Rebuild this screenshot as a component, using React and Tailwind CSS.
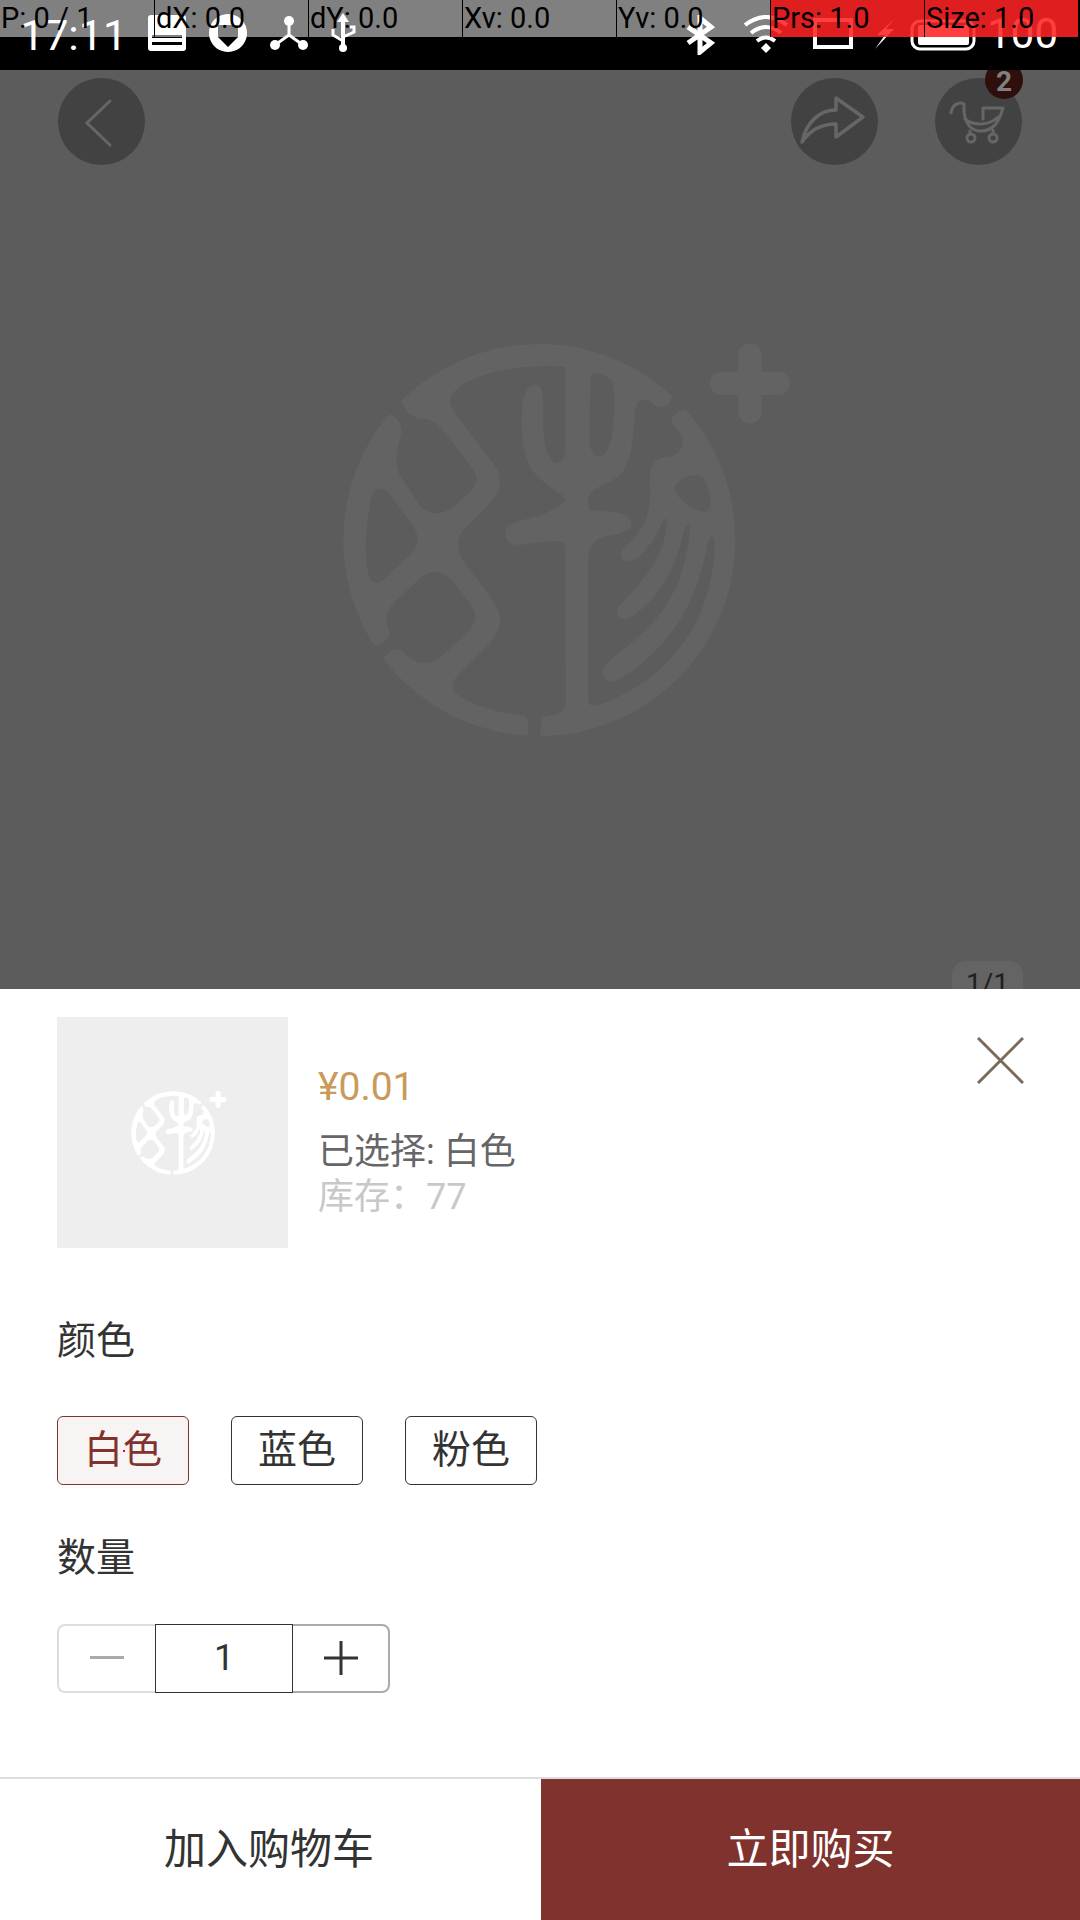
import React from 'react';

const cjk = "font-['Roboto','Noto_Sans_CJK_SC',sans-serif]";

// disc with the shapes of the mark cut out in the background colour
const Logo = ({ color, bg, className }) => (
  <svg viewBox="0 0 1440 1320" className={className}>
    <circle cx="658" cy="660" r="588" fill={color} />
    <g fill={bg}>
      <path d="M735 140 C600 130 440 160 395 225 C380 250 400 270 420 300 L520 430 C550 470 545 510 510 550 L440 620 C405 650 405 690 435 730 L510 830 C550 880 550 920 510 970 L410 1070 C385 1100 400 1120 430 1135 C480 1165 550 1180 610 1188 C628 1192 628 1210 622 1260 L660 1260 L665 1200 C668 1188 680 1185 700 1185 C730 1180 738 1165 738 1130 L735 680 C733 665 720 662 690 662 L600 675 C560 675 550 650 560 625 C570 605 610 600 650 590 C690 575 730 555 735 540 C735 525 700 510 670 485 C625 450 605 400 605 310 C605 240 615 195 645 195 C675 195 670 240 670 320 C672 380 685 425 712 428 C730 425 735 410 735 380 Z" />
      <path d="M812 180 C815 155 835 155 860 170 C885 180 885 210 883 270 C880 340 870 410 835 410 C810 405 808 370 808 330 Z" />
      <path d="M1060 222 L1050 245 C1040 265 1020 270 985 240 C965 235 950 245 945 270 C940 350 935 420 905 460 C885 480 860 490 850 495 C805 510 795 550 810 570 C860 575 935 575 935 610 C935 640 880 645 850 650 C820 660 805 680 805 720 L805 1140 C805 1160 825 1162 850 1150 C1000 1090 1170 960 1185 680 C1185 650 1175 640 1165 660 C1130 850 1060 980 885 1085 C860 1095 835 1060 855 1035 C950 950 1090 880 1110 625 C1105 610 1095 615 1090 640 C1060 780 990 860 925 895 C900 905 880 880 900 855 C970 780 1030 720 1042 605 C1040 590 1030 595 1025 610 C1000 670 960 720 925 725 C900 725 895 695 915 680 C960 640 995 600 990 500 C985 440 1000 415 1040 412 C1080 410 1100 370 1080 340 C1060 315 1045 305 1060 290 C1075 275 1085 265 1100 272 L1125 215 Z" />
      <path d="M1065 500 C1080 470 1140 450 1155 480 C1170 520 1185 570 1155 575 C1120 575 1060 530 1065 500 Z" />
      <path d="M250 255 C265 290 290 295 320 297 C345 300 360 320 380 345 L460 450 C475 475 470 495 450 515 L400 560 C360 590 320 585 295 550 L245 475 C225 445 225 410 240 355 C250 325 240 300 215 285 L170 280 L205 200 Z" />
      <path d="M155 530 C160 500 190 495 210 525 L280 620 C300 650 295 680 270 705 L195 775 C170 800 150 790 145 760 C130 690 140 590 155 530 Z" />
      <path d="M345 755 C385 755 410 800 450 850 C475 885 470 905 445 935 L375 1000 C330 1040 285 1035 250 995 C235 980 215 990 200 1005 L150 1040 L120 980 L175 975 C195 965 215 950 208 935 C195 905 195 875 225 845 L300 775 C315 762 330 755 345 755 Z" />
    </g>
    <path d="M1290 105 V275 M1205 190 H1375" stroke={color} strokeWidth="70" strokeLinecap="round" fill="none" />
  </svg>
);

const cells = ['P: 0 / 1', 'dX: 0.0', 'dY: 0.0', 'Xv: 0.0', 'Yv: 0.0', 'Prs: 1.0', 'Size: 1.0'];

const PointerStrip = () => (
  <div className="absolute top-0 left-0 z-20 flex h-[37px] w-[1078px] font-['Roboto',sans-serif] text-[29px] leading-[37px] text-black">
    {cells.map((c, i) => (
      <div key={c} className={i > 4 ? 'w-[154px] overflow-hidden whitespace-nowrap border-l border-black bg-[#ff2424]/[.875] pl-px' : i === 0 ? 'w-[154px] overflow-hidden whitespace-nowrap bg-white/50 pl-px' : 'w-[154px] overflow-hidden whitespace-nowrap border-l border-black bg-white/50 pl-px'}>
        {c}
      </div>
    ))}
  </div>
);

const StatusBar = () => (
  <div className="relative z-10 flex h-[70px] shrink-0 items-start bg-black pl-[20px] pr-[22px] font-['Roboto',sans-serif] text-[43px] leading-[70px] text-white">
    <span className="w-[128px]">17:11</span>
    <svg width="340" height="40" viewBox="0 0 340 40" className="mt-[15px] overflow-visible" fill="white">
      <rect x="0" y="0" width="38" height="36" rx="3" />
      <rect x="4" y="20" width="30" height="3" fill="black" />
      <rect x="4" y="27" width="30" height="3" fill="black" />
      <path d="M80 -1 a19 19 0 1 0 .01 0 Z M70 10 h20 v12 l-10 10 l-10 -10 Z" fillRule="evenodd" />
      <circle cx="141" cy="6" r="5" />
      <circle cx="127" cy="30" r="5" />
      <circle cx="155" cy="30" r="5" />
      <path d="M141 8 V20 L127 30 M141 20 L155 30" stroke="white" strokeWidth="3" fill="none" />
      <path d="M195 -2 l6 9 h-4 v24 h-4 v-24 h-4 Z" />
      <circle cx="195" cy="33" r="4" />
      <path d="M195 26 l-10 -6 v-6 M195 22 l11 -5 v-5 h-4" stroke="white" strokeWidth="3" fill="none" />
    </svg>
    <div className="ml-auto flex items-start">
      <svg width="306" height="40" viewBox="0 0 306 40" className="mt-[15px]" fill="none" stroke="white">
        <path d="M8 12 L31 28 L20 37 V3 L31 12 L8 28" strokeWidth="5" />
        <path d="M65 10 Q86 -6 107 10 M71 18 Q86 6 101 18 M77 26 Q86 19 95 26" strokeWidth="4" />
        <path d="M86 28 l5 5 l-5 5 l-5 -5 Z" fill="white" stroke="none" />
        <rect x="135" y="5" width="36" height="27" strokeWidth="4" />
        <path d="M214 4 L197 20 L205 20 L195 34 L214 14 L206 14 Z" fill="white" stroke="none" />
        <rect x="232" y="6" width="62" height="28" rx="8" strokeWidth="3" />
        <rect x="238" y="10" width="51" height="20" rx="2" fill="white" stroke="none" />
      </svg>
      <span className="-mt-[1px] w-[72px] text-right text-[42px]">100</span>
    </div>
  </div>
);

const RoundBtn = ({ children }) => (
  <div className="h-[87px] w-[87px] rounded-full bg-[#424242]">{children}</div>
);

const Dimmed = () => (
  <div className="flex h-[919px] shrink-0 flex-col overflow-hidden bg-[#5c5c5c]">
    <div className="flex items-start pt-[8px] pl-[58px] pr-[58px]">
      <RoundBtn>
        <svg width="87" height="87" viewBox="0 0 87 87" fill="none" stroke="#666" strokeWidth="3" strokeLinecap="round">
          <path d="M52 23 L29 45 L52 67" />
        </svg>
      </RoundBtn>
      <div className="ml-auto mr-[57px]">
        <RoundBtn>
          <svg width="87" height="87" viewBox="0 0 87 87" fill="none" stroke="#666" strokeWidth="3.5" strokeLinejoin="round">
            <path d="M72 39 L45 20 V32 C28 32 15 45 11 64 C19 52 30 46 45 46 V59 Z" />
          </svg>
        </RoundBtn>
      </div>
      <div className="relative">
        <RoundBtn>
          <svg width="87" height="87" viewBox="0 0 87 87" fill="none" stroke="#666" strokeWidth="3" strokeLinecap="round" strokeLinejoin="round">
            <path d="M16 35 C17 27 24 23 29 26 C28 40 33 52 44 53 C58 54 64 44 68 30 H48 V41" />
            <path d="M30 41 C38 48 54 48 63 39" />
            <path d="M35 53 V56 M58 52 V56" />
            <circle cx="36" cy="60" r="4" />
            <circle cx="58" cy="60" r="4" />
          </svg>
        </RoundBtn>
        <div className="absolute -top-[17px] left-[50px] flex h-[38px] w-[38px] items-center justify-center rounded-full bg-[#2e0f0c] pt-[3px] font-['Roboto',sans-serif] text-[28px] font-bold text-[#808080]">
          2
        </div>
      </div>
    </div>
    <div className="ml-[320px] mt-[155px]">
      <Logo color="#636363" bg="#5c5c5c" className="h-[440px] w-[480px]" />
    </div>
    <div className="mr-[57px] mt-auto h-[28px] w-[71px] self-end overflow-hidden rounded-t-[14px] bg-[#646464] pt-[8px] text-center font-['Roboto',sans-serif] text-[28px] leading-[30px] text-[#1f1f1f]">
      1/1
    </div>
  </div>
);

const Option = ({ label, active }) => (
  <div className={active
    ? 'relative flex h-[69px] w-[132px] items-center justify-center rounded-[6px] border border-[#7f322e] bg-[#f8f4f3] text-[39px] text-[#7f322e]'
    : 'flex h-[69px] w-[132px] items-center justify-center rounded-[6px] border border-[#333] text-[39px] text-[#333]'}>
    {label}
    {active && <span className="absolute left-[65px] top-[33px] h-[2px] w-[2px] bg-[#f00]" />}
  </div>
);

const Sheet = () => (
  <div className={cjk + ' flex flex-1 flex-col bg-white'}>
    <div className="flex pl-[57px] pr-[56px] pt-[28px]">
      <div className="flex h-[231px] w-[231px] items-center justify-center bg-[#eeeeee] pl-[9px]">
        <Logo color="#ffffff" bg="#eeeeee" className="h-[94px] w-[103px]" />
      </div>
      <div className="ml-[30px] pt-[48px]">
        <div className="text-[39px] leading-[44px] text-[#c89b5c]">¥0.01</div>
        <div className="mt-[20px] text-[36px] leading-[46px] text-[#666]">已选择: 白色</div>
        <div className="text-[36px] leading-[44px] text-[#c8c8c8]">库存：77</div>
      </div>
      <svg width="47" height="47" viewBox="0 0 47 47" className="ml-auto mt-[20px]" stroke="#7a6a5a" strokeWidth="3">
        <path d="M1 1 L46 46 M46 1 L1 46" />
      </svg>
    </div>

    <div className="pl-[57px]">
      <div className="mt-[68px] text-[39px] leading-[50px] text-[#333]">颜色</div>
      <div className="mt-[50px] flex gap-[42px]">
        <Option label="白色" active />
        <Option label="蓝色" />
        <Option label="粉色" />
      </div>
      <div className="mt-[48px] text-[39px] leading-[50px] text-[#333]">数量</div>
      <div className="mt-[41px] flex h-[69px] w-[333px] text-[#333]">
        <div className="flex w-[98px] items-center justify-center rounded-l-[8px] border-2 border-r-0 border-[#ddd] pb-[2px]">
          <span className="h-[3px] w-[34px] bg-[#aaa]" />
        </div>
        <div className="flex w-[138px] items-center justify-center border border-[#333] pb-[2px] font-['Roboto',sans-serif] text-[36px]">1</div>
        <div className="flex w-[97px] items-center justify-center rounded-r-[8px] border-2 border-l-0 border-[#aaa] pb-[2px]">
          <svg width="34" height="34" viewBox="0 0 34 34" stroke="#333" strokeWidth="3">
            <path d="M0 17 H34 M17 0 V34" />
          </svg>
        </div>
      </div>
    </div>

    <div className="mt-auto flex h-[143px] border-t-2 border-[#dddddd] text-[42px]">
      <div className="flex w-[541px] items-center justify-center pr-[3px] text-[#333]">加入购物车</div>
      <div className="flex flex-1 items-center justify-center bg-[#7f322e] text-white">立即购买</div>
    </div>
  </div>
);

export default function App() {
  return (
    <div className="relative flex h-[1920px] w-[1080px] flex-col overflow-hidden bg-white">
      <PointerStrip />
      <StatusBar />
      <Dimmed />
      <Sheet />
    </div>
  );
}
